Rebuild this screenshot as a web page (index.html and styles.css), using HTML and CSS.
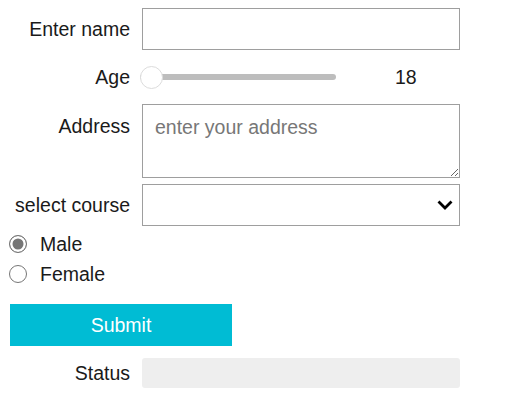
FILE: index.html
```html
<!DOCTYPE html>
<html>
<head>
<meta charset="utf-8">
<link rel="stylesheet" href="styles.css">
</head>
<body>
<form class="form">
  <div class="row">
    <label class="label" for="name">Enter name</label>
    <input class="field" id="name" type="text">
  </div>
  <div class="row">
    <label class="label" for="age">Age</label>
    <div class="age">
      <input class="slider" id="age" type="range" min="18" max="100" value="18">
      <span class="age-value">18</span>
    </div>
  </div>
  <div class="row row-top">
    <label class="label label-top" for="addr">Address</label>
    <textarea class="field area" id="addr" placeholder="enter your address"></textarea>
  </div>
  <div class="row">
    <label class="label" for="course">select course</label>
    <div class="select-wrap">
      <select class="field select" id="course"><option></option></select>
      <svg class="chevron" width="16" height="10" viewBox="0 0 16 10"><path d="M1.5 1.5 L8 8 L14.5 1.5" fill="none" stroke="#000" stroke-width="2.8"/></svg>
    </div>
  </div>
  <div class="radios">
    <label class="radio-row"><input class="radio" type="radio" name="g" checked><span>Male</span></label>
    <label class="radio-row"><input class="radio" type="radio" name="g"><span>Female</span></label>
  </div>
  <button class="submit" type="button">Submit</button>
  <div class="row status-row">
    <span class="label">Status</span>
    <div class="status"></div>
  </div>
</form>
</body>
</html>
```
FILE: styles.css
```css
* { box-sizing: border-box; }
body {
  margin: 0;
  background: #fff;
  font-family: "Liberation Sans", Arial, sans-serif;
  font-size: 19.5px;
  color: #1a1a1a;
}
.form {
  padding: 8px 8px 0 8px;
  display: flex;
  flex-direction: column;
}
.row {
  display: grid;
  grid-template-columns: 122px 318px;
  column-gap: 12px;
  align-items: center;
  margin-bottom: 6px;
}
.label { display: block; width: 130px; margin-left: -8px; text-align: right; }
.row-top { align-items: start; }
.label-top { padding-top: 11px; }
.field {
  font-family: inherit;
  font-size: 19.5px;
  color: #1a1a1a;
  border: 1px solid #9e9e9e;
  background: #fff;
  width: 318px;
  height: 42px;
  padding: 0 12px;
  margin: 0;
  outline: none;
  border-radius: 0;
}
.age {
  height: 42px;
  display: flex;
  align-items: center;
}
.slider {
  -webkit-appearance: none;
  appearance: none;
  width: 196px;
  height: 22px;
  margin: 0 0 0 -2px;
  background: transparent;
}
.slider::-webkit-slider-runnable-track {
  height: 6px;
  background: #bdbdbd;
  border-radius: 3px;
}
.slider::-webkit-slider-thumb {
  -webkit-appearance: none;
  width: 23px;
  height: 23px;
  border-radius: 50%;
  background: #fff;
  border: 1px solid #dcdcdc;
  margin-top: -8.5px;
}
.age-value { margin-left: 59px; }
.area {
  height: 74px;
  padding: 11px 12px;
  resize: both;
  display: block;
}
.area::placeholder { color: #777; }
.select-wrap { position: relative; width: 318px; height: 42px; }
.select {
  -webkit-appearance: none;
  appearance: none;
  display: block;
}
.chevron {
  position: absolute;
  right: 7px;
  top: 16px;
  pointer-events: none;
}
.radios {
  display: flex;
  flex-direction: column;
  margin-top: -3px;
}
.radio-row {
  display: flex;
  align-items: center;
  height: 30px;
}
.radio {
  -webkit-appearance: none;
  appearance: none;
  width: 18px;
  height: 18px;
  margin: 0 13px 0 1px;
  border: 1.5px solid #767676;
  border-radius: 50%;
  background: #fff;
}
.radio:checked {
  background: #767676;
  box-shadow: inset 0 0 0 2.5px #fff;
}
.submit {
  margin: 15px 0 0 2px;
  width: 222px;
  height: 42px;
  border: none;
  background: #00bcd4;
  color: #fff;
  font-family: inherit;
  font-size: 19.5px;
  padding: 0;
}
.status-row { margin-top: 12px; }
.status {
  width: 318px;
  height: 30px;
  background: #eeeeee;
  border-radius: 3px;
}
```
